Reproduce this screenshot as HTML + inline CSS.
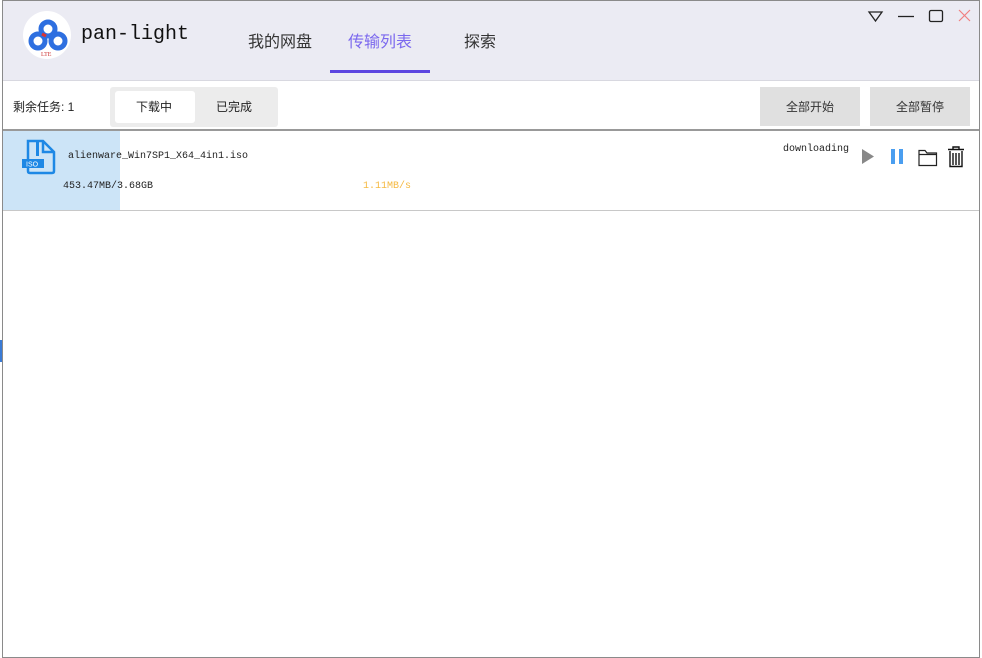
<!DOCTYPE html>
<html><head><meta charset="utf-8"><style>
*{margin:0;padding:0;box-sizing:border-box}
body{width:982px;height:658px;background:#fff;position:relative;overflow:hidden;font-family:"Liberation Serif","Noto Serif CJK SC",serif}
.win{position:absolute;left:2px;top:0;width:978px;height:658px;border:1px solid #8a8a8a;background:#fff}
.hdr{position:absolute;left:0;top:0;width:976px;height:80px;background:#ebebf3;border-bottom:1px solid #d8d8e0}
.t{position:absolute;white-space:nowrap}
.cjk{font-family:"Liberation Sans","Noto Sans CJK SC",sans-serif}
.mono{font-family:"Liberation Mono","Noto Serif CJK SC",monospace}
</style></head><body>
<div style="position:absolute;left:0;top:340px;width:2px;height:22px;background:#3a7bd5"></div>
<div class="win">
<div class="hdr">
 <div style="position:absolute;left:20px;top:10px;width:48px;height:48px;border-radius:50%;background:#fff"></div>
 <svg style="position:absolute;left:24px;top:16px" width="42" height="40" viewBox="0 0 42 40">
  <circle cx="21" cy="12" r="7" fill="none" stroke="#2e6fe0" stroke-width="5"/>
  <circle cx="11" cy="24" r="7" fill="none" stroke="#2e6fe0" stroke-width="5"/>
  <circle cx="31" cy="24" r="7" fill="none" stroke="#2e6fe0" stroke-width="5"/>
  <path d="M15 17 L19 19" stroke="#d33" stroke-width="3"/>
  <text x="14" y="39" font-size="6" fill="#c33">LTE</text>
 </svg>
 <div class="t mono" style="left:78px;top:22px;font-size:20px;color:#111">pan-light</div>
 <div class="t cjk" style="left:245px;top:27px;font-size:16px;color:#333">我的网盘</div>
 <div class="t cjk" style="left:345px;top:27px;font-size:16px;color:#7b68ee">传输列表</div>
 <div style="position:absolute;left:327px;top:69px;width:100px;height:3px;background:#5b45e0"></div>
 <div class="t cjk" style="left:461px;top:27px;font-size:16px;color:#333">探索</div>
 <svg style="position:absolute;left:860px;top:6px" width="110" height="20">
  <path d="M6 5 L19 5 L12.5 14 Z" fill="none" stroke="#222" stroke-width="1.3"/>
  <path d="M35 9.5 L51 9.5" stroke="#222" stroke-width="1.3"/>
  <rect x="66.5" y="3.5" width="13" height="11" rx="1.5" fill="none" stroke="#222" stroke-width="1.3"/>
  <path d="M96 3 L107 14 M107 3 L96 14" stroke="#f08080" stroke-width="1.2"/>
 </svg>
</div>
<div class="t cjk" style="left:10px;top:97px;font-size:12px;color:#222">剩余任务: 1</div>
<div style="position:absolute;left:107px;top:86px;width:168px;height:40px;background:#ececec;border-radius:3px"></div>
<div style="position:absolute;left:112px;top:90px;width:80px;height:32px;background:#fff;border-radius:3px"></div>
<div class="t cjk" style="left:133px;top:97px;font-size:12px;color:#222">下载中</div>
<div class="t cjk" style="left:213px;top:97px;font-size:12px;color:#222">已完成</div>
<div style="position:absolute;left:757px;top:86px;width:100px;height:39px;background:#e0e0e0"></div>
<div class="t cjk" style="left:783px;top:97px;font-size:12px;color:#333">全部开始</div>
<div style="position:absolute;left:867px;top:86px;width:100px;height:39px;background:#e0e0e0"></div>
<div class="t cjk" style="left:893px;top:97px;font-size:12px;color:#333">全部暂停</div>
<div style="position:absolute;left:0;top:128px;width:976px;height:2px;background:#999"></div>
<div style="position:absolute;left:0;top:130px;width:117px;height:80px;background:#cce4f7"></div>
<div style="position:absolute;left:0;top:209px;width:976px;height:1px;background:#c8c8c8"></div>
<svg style="position:absolute;left:18px;top:138px" width="36" height="36" viewBox="0 0 36 36">
 <path d="M7 2 H22 L33 13 V32 Q33 34 31 34 H9 Q7 34 7 32 Z" fill="none" stroke="#1e88e5" stroke-width="2.5"/>
 <path d="M22 2 V13 H33" fill="none" stroke="#1e88e5" stroke-width="2.5"/>
 <rect x="15" y="3" width="3" height="14" fill="#1e88e5"/>
 <rect x="1" y="20" width="22" height="9" fill="#1e88e5"/>
 <text x="5" y="27.5" font-size="7" fill="#fff" font-family="Liberation Sans">ISO</text>
</svg>
<div class="t mono" style="left:65px;top:150px;font-size:10px;color:#222">alienware_Win7SP1_X64_4in1.iso</div>
<div class="t mono" style="left:60px;top:180px;font-size:10px;color:#222">453.47MB/3.68GB</div>
<div class="t mono" style="left:360px;top:180px;font-size:10px;color:#f5b942">1.11MB/s</div>
<div class="t mono" style="left:780px;top:143px;font-size:10px;color:#222">downloading</div>
<svg style="position:absolute;left:855px;top:143px" width="120" height="26">
 <path d="M4 5 L16 12.5 L4 20 Z" fill="#888"/>
 <rect x="33" y="5" width="4" height="15" fill="#4a9ef0"/><rect x="41" y="5" width="4" height="15" fill="#4a9ef0"/>
 <path d="M61 6.5 H67 L69 9 H78.5 V21.5 H61 Z M61 10.5 H78.5" fill="none" stroke="#222" stroke-width="1.2"/>
 <path d="M90 5.5 H106 M95 5.5 V3 H101 V5.5 M92 7 V22.5 H104 V7 M95 9 V21 M98 9 V21 M101 9 V21" fill="none" stroke="#111" stroke-width="1.4"/>
</svg>
</div>
</body></html>
